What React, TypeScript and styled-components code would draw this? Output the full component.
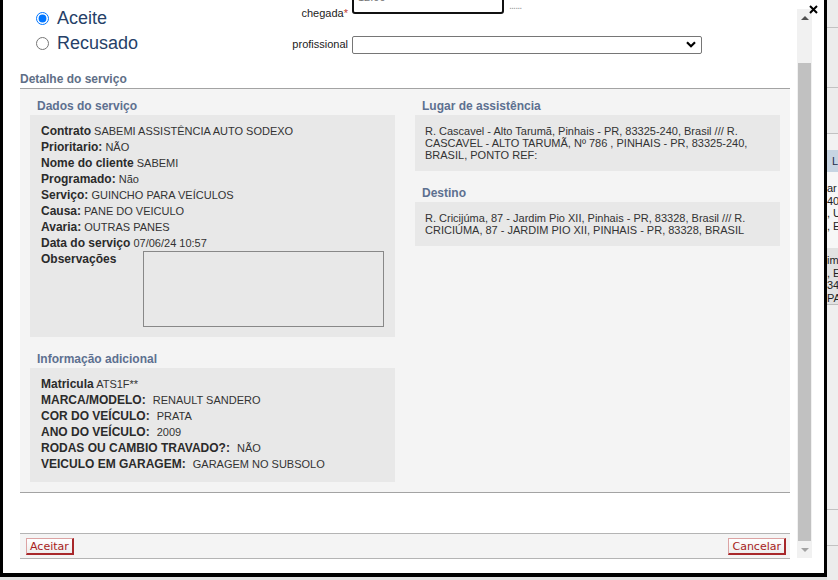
import React from "react";
import styled, { createGlobalStyle } from "styled-components";

const GlobalStyle = createGlobalStyle`
  html, body {
    margin: 0;
    padding: 0;
  }

  body {
    width: 838px;
    height: 580px;
    overflow: hidden;
    background: #e2e2e2;
    font-family: "Liberation Sans", Arial, sans-serif;
  }
`;

const Page = styled.div`
  display: flex;
  align-items: flex-start;
  width: 838px;
  height: 580px;
  overflow: hidden;
  background: #e2e2e2;
`;

const Dialog = styled.div`
  position: relative;
  display: flex;
  flex-shrink: 0;
  width: 821px;
  height: 573px;
  background: #fff;
  border: 3px solid #000;
  border-top: 0;
  border-bottom-width: 4px;
`;

const Main = styled.div`
  flex: 1;
  min-width: 0;
  display: flex;
  flex-direction: column;
  justify-content: space-between;
  overflow: hidden;
`;

const ScrollContent = styled.div`
  margin-top: -12px;
  padding: 0 7px 0 17px;
`;

const TopForm = styled.div`
  display: flex;
  height: 82px;
`;

const RadioGroup = styled.div`
  width: 234px;
  padding: 18px 0 0 16px;
`;

const RadioRow = styled.label`
  display: flex;
  align-items: center;
  height: 25px;
  font-size: 18px;
  color: #263f68;
`;

const Radio = styled.input`
  width: 13px;
  height: 13px;
  margin: 0 8px 0 0;
`;

const FieldGroup = styled.div`
  display: grid;
  grid-template-columns: 78px auto;
  grid-template-rows: 32px auto;
  column-gap: 4px;
  align-items: start;
`;

const FieldLabel = styled.span<{ $top: number }>`
  padding-top: ${(p) => p.$top}px;
  font-size: 11px;
  line-height: 14px;
  color: #222;
  text-align: right;
  white-space: nowrap;
`;

const Required = styled.span`
  color: #c0392b;
`;

const TimeRow = styled.div`
  display: flex;
  align-items: flex-start;
`;

const TimeInput = styled.input`
  box-sizing: border-box;
  width: 152px;
  height: 22px;
  margin-top: 4px;
  padding: 0 4px 13px;
  border: 2px solid #111;
  border-radius: 3px;
  font: 11px "Liberation Sans", Arial, sans-serif;
  color: #777;
  outline: none;
`;

const Dots = styled.span`
  margin: 10px 0 0 5px;
  font-size: 11px;
  line-height: 14px;
  color: #a0a0a0;
  letter-spacing: -1px;
`;

const SelectWrap = styled.div`
  position: relative;
  width: 350px;
  height: 18px;
  margin-top: 15px;
`;

const Select = styled.select`
  box-sizing: border-box;
  width: 100%;
  height: 18px;
  appearance: none;
  background: #fff;
  border: 1px solid #767676;
  border-radius: 2px;
  font: 11px "Liberation Sans", Arial, sans-serif;
`;

const Chevron = styled.svg`
  position: absolute;
  right: 6px;
  top: 6px;
  pointer-events: none;
`;

const DetailHeader = styled.div`
  padding: 1px 0 1px;
  border-bottom: 1px solid #a3a3a3;
  font-size: 12px;
  font-weight: bold;
  line-height: 16px;
  color: #5f6f87;
`;

const Panel = styled.div`
  display: grid;
  grid-template-columns: 1fr 1fr;
  column-gap: 20px;
  align-items: start;
  padding: 8px 10px 10px;
  background: #f4f4f4;
  border-bottom: 1px solid #a3a3a3;
`;

const Column = styled.div`
  display: flex;
  flex-direction: column;
`;

const SectionTitle = styled.div<{ $first?: boolean }>`
  margin: ${(p) => (p.$first ? 0 : 13)}px 0 1px;
  padding: 1px 0 0 7px;
  font-size: 12px;
  font-weight: bold;
  line-height: 16px;
  color: #5d7090;
`;

const DataBox = styled.div`
  padding: 8px 11px 10px;
  background: #e8e8e8;
  font-size: 11px;
  line-height: 16px;
  color: #333;
`;

const DataRow = styled.div`
  height: 16px;
  white-space: nowrap;
`;

const Label = styled.span`
  font-size: 12px;
  font-weight: bold;
  color: #2b2b2b;
`;

const Value = styled.span<{ $gap?: number }>`
  margin-left: ${(p) => p.$gap ?? 0}px;
`;

const NotesRow = styled.div`
  display: flex;
  align-items: flex-start;
`;

const NotesLabel = styled(Label)`
  width: 102px;
  flex-shrink: 0;
  line-height: 16px;
`;

const Notes = styled.textarea`
  box-sizing: border-box;
  flex: 1;
  height: 76px;
  margin: 0;
  border: 1px solid #888;
  background: #e8e8e8;
  resize: none;
`;

const AddressBox = styled.div`
  padding: 10px;
  background: #e8e8e8;
  font-size: 11px;
  line-height: 12px;
  color: #333;
`;

const Footer = styled.div`
  display: flex;
  justify-content: space-between;
  margin: 0 7px 14px 17px;
  padding: 4px 4px 3px 6px;
  background: #f4f4f4;
  border-top: 1px solid #b4b4b4;
  border-bottom: 1px solid #b4b4b4;
`;

const ActionButton = styled.button`
  box-sizing: border-box;
  height: 17px;
  padding: 0 3px;
  background: linear-gradient(#ffffff, #ededed);
  border: 1px solid #dca3a3;
  border-right: 2px solid #a8282b;
  border-bottom: 2px solid #a8282b;
  font: 11px "DejaVu Sans", Tahoma, sans-serif;
  line-height: 13px;
  color: #a81d22;
`;

const ScrollTrack = styled.div`
  display: flex;
  flex-direction: column;
  align-items: center;
  flex-shrink: 0;
  width: 15px;
  height: 549px;
  margin: 9px 12px 0 0;
  background: #f1f1f1;
`;

const ArrowCell = styled.div`
  display: flex;
  align-items: center;
  justify-content: center;
  width: 15px;
  height: 17px;
`;

const ArrowUp = styled.div`
  width: 0;
  height: 0;
  border-left: 4px solid transparent;
  border-right: 4px solid transparent;
  border-bottom: 4px solid #505050;
`;

const ArrowDown = styled.div`
  width: 0;
  height: 0;
  border-left: 4px solid transparent;
  border-right: 4px solid transparent;
  border-top: 4px solid #a3a3a3;
`;

const Thumb = styled.div`
  width: 13px;
  height: 478px;
  margin-top: 37px;
  background: #c1c1c1;
`;

const TrackFill = styled.div`
  flex: 1;
`;

const CloseButton = styled.div`
  position: absolute;
  top: 5px;
  right: 6px;
  display: flex;
`;

const Backdrop = styled.div`
  flex: 1;
  height: 580px;
  display: flex;
  flex-direction: column;
  overflow: hidden;
  background: #ececec;
  font-size: 11px;
  color: #222;
  white-space: nowrap;
`;

const BackdropBand = styled.div<{ $h: number; $bg?: string; $line?: boolean }>`
  height: ${(p) => p.$h}px;
  flex-shrink: 0;
  background: ${(p) => p.$bg ?? "transparent"};
  border-bottom: ${(p) => (p.$line ? "1px solid #c2c2c2" : "0")};
`;

const BackdropHeader = styled.div`
  height: 22px;
  padding-left: 5px;
  background: #c7d4e2;
  line-height: 22px;
  color: #1e2f4a;
`;

const BackdropText = styled.div<{ $bg: string; $pad: string }>`
  padding: ${(p) => p.$pad};
  background: ${(p) => p.$bg};
  line-height: 12.5px;
`;

const serviceRows: [string, string][] = [
  ["Contrato", "SABEMI ASSISTÊNCIA AUTO SODEXO"],
  ["Prioritario:", "NÃO"],
  ["Nome do cliente", "SABEMI"],
  ["Programado:", "Não"],
  ["Serviço:", "GUINCHO PARA VEÍCULOS"],
  ["Causa:", "PANE DO VEICULO"],
  ["Avaria:", "OUTRAS PANES"],
  ["Data do serviço", "07/06/24 10:57"],
];

const extraRows: [string, string, number][] = [
  ["Matricula", "ATS1F**", 0],
  ["MARCA/MODELO:", "RENAULT SANDERO", 4],
  ["COR DO VEÍCULO:", "PRATA", 4],
  ["ANO DO VEÍCULO:", "2009", 4],
  ["RODAS OU CAMBIO TRAVADO?:", "NÃO", 4],
  ["VEICULO EM GARAGEM:", "GARAGEM NO SUBSOLO", 4],
];

export default function App() {
  return (
    <>
      <GlobalStyle />
      <Page>
        <Dialog>
          <Main>
            <ScrollContent>
              <TopForm>
                <RadioGroup>
                  <RadioRow>
                    <Radio type="radio" name="status" defaultChecked />
                    Aceite
                  </RadioRow>
                  <RadioRow>
                    <Radio type="radio" name="status" />
                    Recusado
                  </RadioRow>
                </RadioGroup>
                <FieldGroup>
                  <FieldLabel $top={18}>
                    chegada<Required>*</Required>
                  </FieldLabel>
                  <TimeRow>
                    <TimeInput defaultValue="12:00" />
                    <Dots>......</Dots>
                  </TimeRow>
                  <FieldLabel $top={17}>profissional</FieldLabel>
                  <SelectWrap>
                    <Select defaultValue="">
                      <option value=""></option>
                    </Select>
                    <Chevron width="10" height="7" viewBox="0 0 10 7">
                      <path d="M1 1.2 L5 5.2 L9 1.2" fill="none" stroke="#000" strokeWidth="2.2" />
                    </Chevron>
                  </SelectWrap>
                </FieldGroup>
              </TopForm>

              <DetailHeader>Detalhe do serviço</DetailHeader>
              <Panel>
                <Column>
                  <SectionTitle $first>Dados do serviço</SectionTitle>
                  <DataBox>
                    {serviceRows.map(([label, value]) => (
                      <DataRow key={label}>
                        <Label>{label}</Label> <Value>{value}</Value>
                      </DataRow>
                    ))}
                    <NotesRow>
                      <NotesLabel>Observações</NotesLabel>
                      <Notes readOnly />
                    </NotesRow>
                  </DataBox>

                  <SectionTitle>Informação adicional</SectionTitle>
                  <DataBox>
                    {extraRows.map(([label, value, gap]) => (
                      <DataRow key={label}>
                        <Label>{label}</Label> <Value $gap={gap}>{value}</Value>
                      </DataRow>
                    ))}
                  </DataBox>
                </Column>

                <Column>
                  <SectionTitle $first>Lugar de assistência</SectionTitle>
                  <AddressBox>
                    R. Cascavel - Alto Tarumã, Pinhais - PR, 83325-240, Brasil /// R. CASCAVEL - ALTO
                    TARUMÃ, Nº 786 , PINHAIS - PR, 83325-240, BRASIL, PONTO REF:
                  </AddressBox>

                  <SectionTitle>Destino</SectionTitle>
                  <AddressBox>
                    R. Cricijúma, 87 - Jardim Pio XII, Pinhais - PR, 83328, Brasil /// R. CRICIÚMA, 87 -
                    JARDIM PIO XII, PINHAIS - PR, 83328, BRASIL
                  </AddressBox>
                </Column>
              </Panel>
            </ScrollContent>

            <Footer>
              <ActionButton>Aceitar</ActionButton>
              <ActionButton>Cancelar</ActionButton>
            </Footer>
          </Main>

          <ScrollTrack>
            <ArrowCell>
              <ArrowUp />
            </ArrowCell>
            <Thumb />
            <TrackFill />
            <ArrowCell>
              <ArrowDown />
            </ArrowCell>
          </ScrollTrack>

          <CloseButton>
            <svg width="9" height="9" viewBox="0 0 9 9">
              <path d="M1 1 L8 8 M8 1 L1 8" stroke="#000" strokeWidth="2" />
            </svg>
          </CloseButton>
        </Dialog>

        <Backdrop>
          <BackdropBand $h={27} $line />
          <BackdropBand $h={59} $line />
          <BackdropBand $h={45} $line />
          <BackdropBand $h={16} $bg="#f2f2f2" />
          <BackdropHeader>L</BackdropHeader>
          <BackdropText $bg="#f7f7f7" $pad="10px 0 16px">
            <div>ar</div>
            <div>40</div>
            <div>, U</div>
            <div>, E</div>
          </BackdropText>
          <BackdropText $bg="#e2e2e2" $pad="6px 0 0">
            <div>im</div>
            <div>, E</div>
            <div>34</div>
            <div>PA</div>
          </BackdropText>
          <BackdropBand $h={1} $bg="#bdbdbd" />
          <BackdropBand $h={204} $bg="#efefef" $line />
          <BackdropBand $h={35} $bg="#efefef" $line />
        </Backdrop>
      </Page>
    </>
  );
}
